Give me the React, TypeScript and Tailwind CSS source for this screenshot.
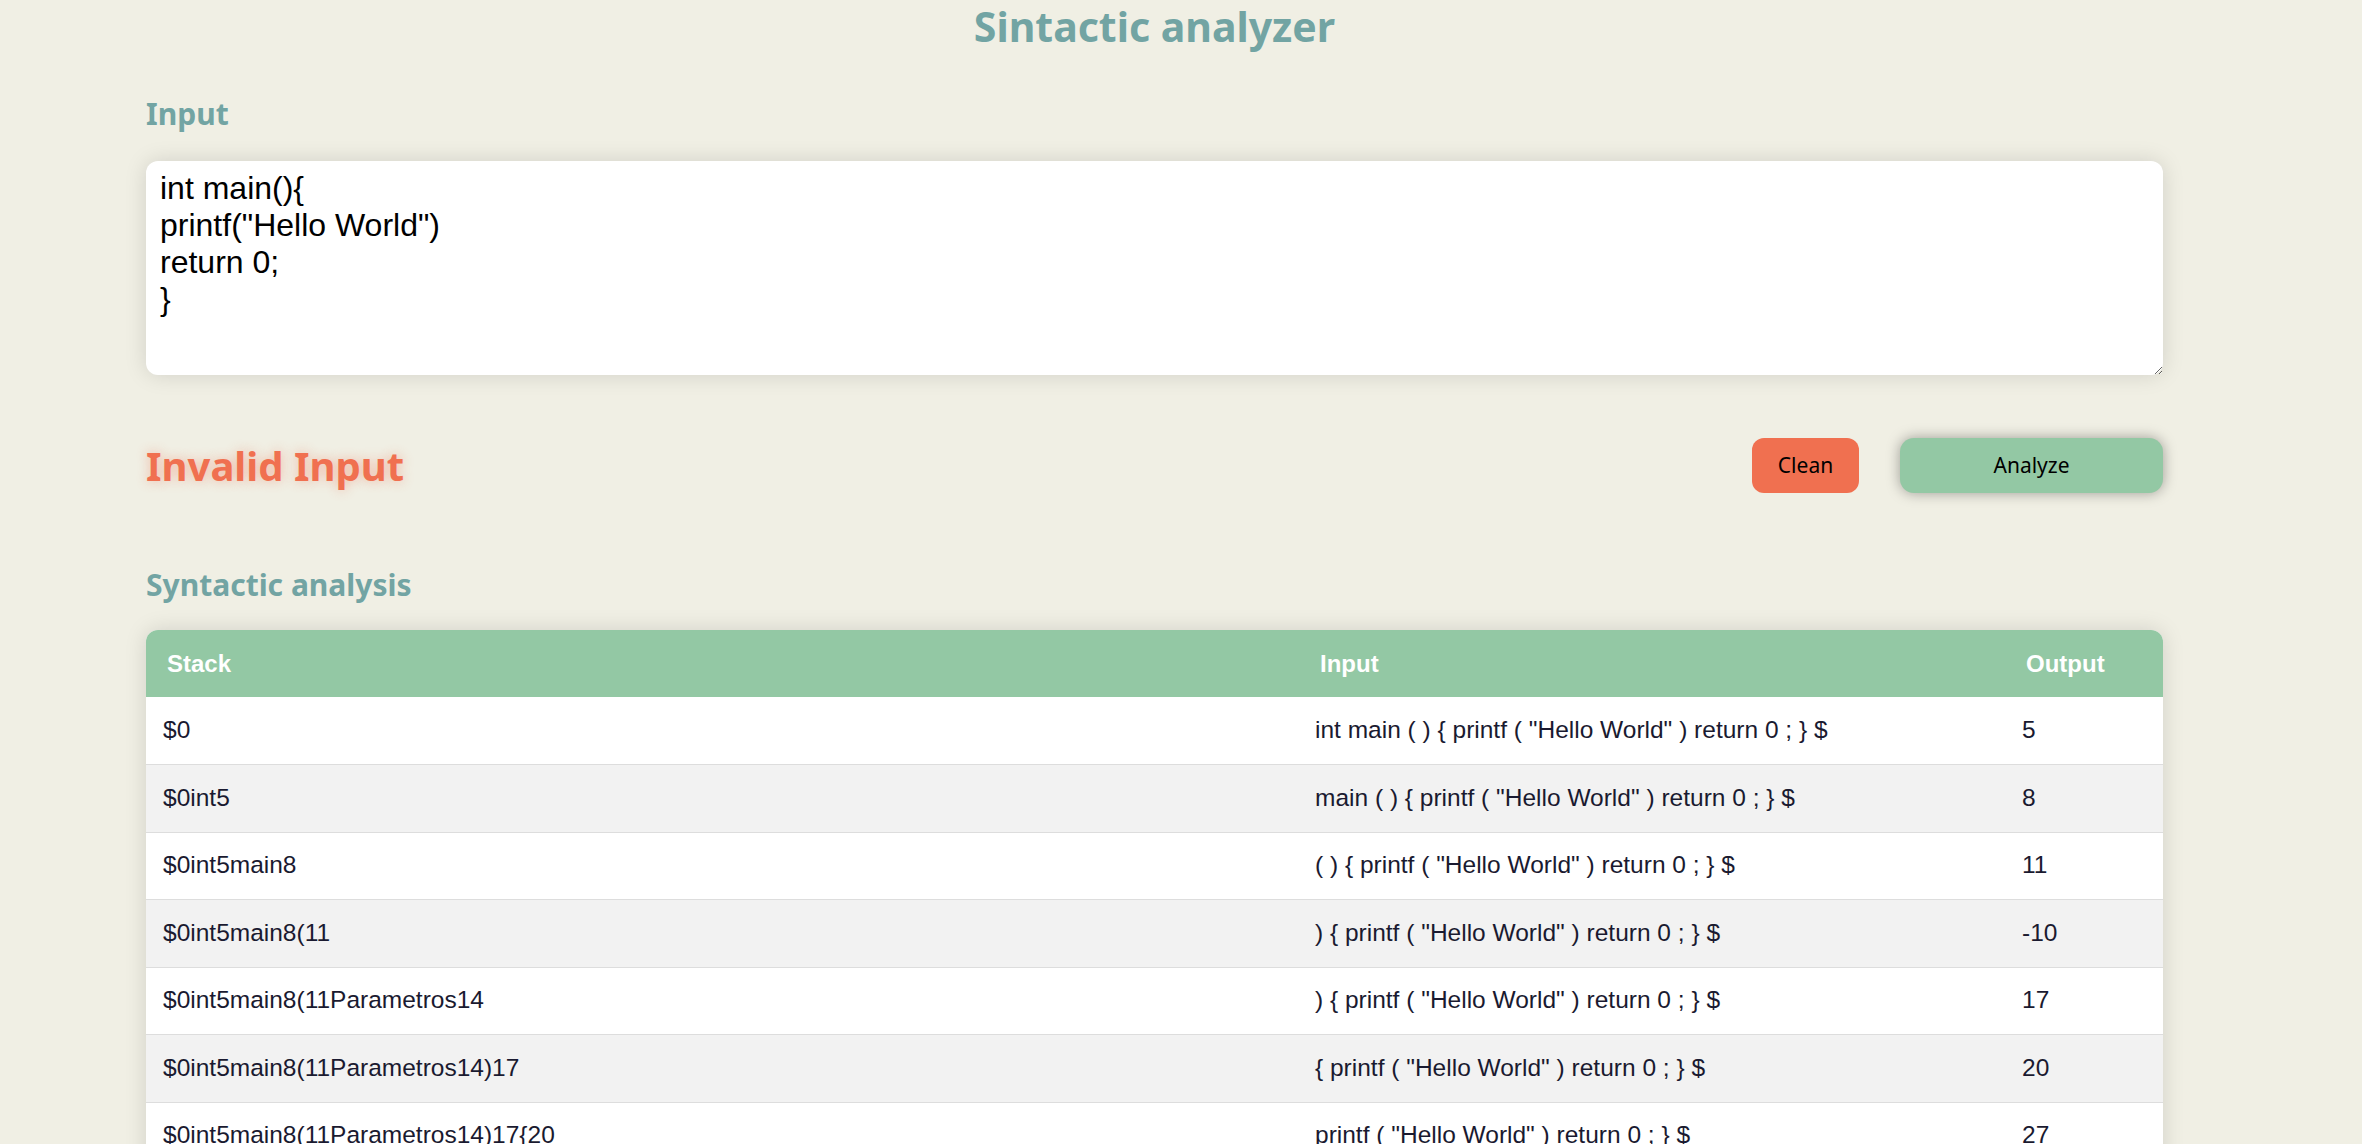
import React from 'react'

type Row = { stack: string; input: string; output: string }

const rows: Row[] = [
  { stack: '$0', input: 'int main ( ) { printf ( "Hello World" ) return 0 ; } $', output: '5' },
  { stack: '$0int5', input: 'main ( ) { printf ( "Hello World" ) return 0 ; } $', output: '8' },
  { stack: '$0int5main8', input: '( ) { printf ( "Hello World" ) return 0 ; } $', output: '11' },
  { stack: '$0int5main8(11', input: ') { printf ( "Hello World" ) return 0 ; } $', output: '-10' },
  { stack: '$0int5main8(11Parametros14', input: ') { printf ( "Hello World" ) return 0 ; } $', output: '17' },
  { stack: '$0int5main8(11Parametros14)17', input: '{ printf ( "Hello World" ) return 0 ; } $', output: '20' },
  { stack: '$0int5main8(11Parametros14)17{20', input: 'printf ( "Hello World" ) return 0 ; } $', output: '27' },
]

const code = 'int main(){\nprintf("Hello World")\nreturn 0;\n}'

export default function App() {
  return (
    <div className="min-h-screen bg-[#f0efe4] font-['Noto_Sans',sans-serif]">
      <div className="ml-[146px] w-[2017px] flex flex-col">
        <h1 className="text-center text-[41px] leading-[52px] font-bold text-[#72a4a3]">
          Sintactic analyzer
        </h1>

        <h2 className="mt-[44px] text-[30px] leading-[36px] font-bold text-[#72a4a3]">Input</h2>

        <textarea
          defaultValue={code}
          spellCheck={false}
          className="mt-[29px] h-[214px] w-full rounded-[12px] bg-white px-[14px] pt-[9px] pb-[8px] text-[32px] leading-[37px] text-black font-['Liberation_Sans',Arial,sans-serif] shadow-[0_0_22px_rgba(0,0,0,0.13)] outline-none"
        />

        <div className="mt-[63px] flex items-center h-[55px]">
          <span className="text-[40px] font-bold text-[#f07050] [text-shadow:0_0_12px_rgba(240,112,80,0.45)]">
            Invalid Input
          </span>
          <div className="ml-auto flex items-center gap-[41px]">
            <button className="h-[55px] w-[107px] rounded-[12px] bg-[#f07050] text-[21px] text-black">
              Clean
            </button>
            <button className="h-[55px] w-[263px] rounded-[14px] bg-[#93c8a4] text-[21px] text-black shadow-[0_0_14px_rgba(0,0,0,0.35)]">
              Analyze
            </button>
          </div>
        </div>

        <h2 className="mt-[74px] text-[30px] leading-[36px] font-bold text-[#72a4a3]">Syntactic analysis</h2>

        <div className="mt-[27px] rounded-t-[12px] overflow-hidden bg-white shadow-[0_0_22px_rgba(0,0,0,0.13)] font-['Liberation_Sans',Arial,sans-serif]">
          <table className="w-full border-collapse text-left">
            <thead>
              <tr className="bg-[#93c8a4] h-[67px] text-white text-[24px] font-bold">
                <th className="w-[1151px] pl-[21px] font-bold">Stack</th>
                <th className="w-[707px] pl-[23px] font-bold">Input</th>
                <th className="pl-[22px] font-bold">Output</th>
              </tr>
            </thead>
            <tbody>
              {rows.map((r, i) => (
                <tr
                  key={i}
                  className={`h-[67.5px] text-[24.5px] text-[#1a1a30] border-b-[1.5px] border-[#dddddd] ${i % 2 === 1 ? 'bg-[#f2f2f2]' : 'bg-white'}`}
                >
                  <td className="pl-[17px]">{r.stack}</td>
                  <td className="pl-[18px]">{r.input}</td>
                  <td className="pl-[18px]">{r.output}</td>
                </tr>
              ))}
            </tbody>
          </table>
        </div>
      </div>
    </div>
  )
}
